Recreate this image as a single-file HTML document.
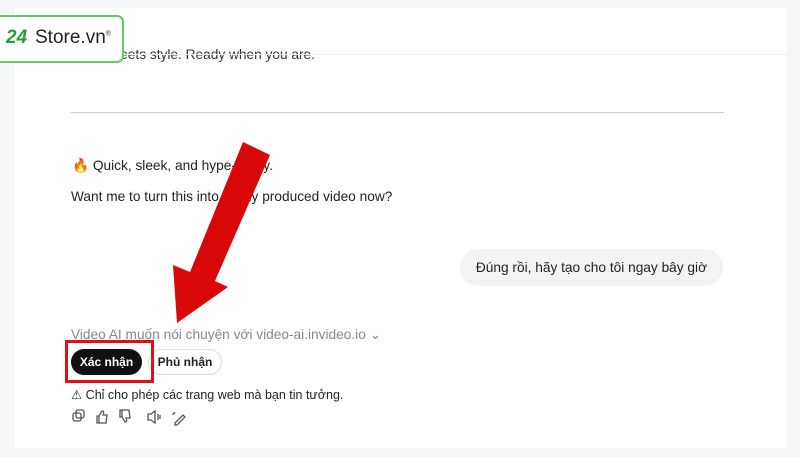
<!DOCTYPE html>
<html><head><meta charset="utf-8"><style>
body{margin:0;width:800px;height:457px;background:#f5f6f8;font-family:"Liberation Sans",sans-serif;position:relative;overflow:hidden;color:#222}
.panel{position:absolute;left:15px;top:8px;width:772px;height:440px;background:#fff}
.hl{position:absolute;left:15px;top:54px;width:772px;height:1px;background:#eee}
.t{position:absolute;font-size:13.7px;white-space:nowrap}
.div{position:absolute;left:71px;top:112px;width:653px;height:1px;background:#ccc}
.bubble{position:absolute;left:460px;top:249px;width:263px;height:37px;border-radius:19px;background:#f3f3f3;font-size:13.7px;line-height:37px;text-align:center}
.logo{position:absolute;left:-10px;top:15px;width:130px;height:44px;border:2px solid #6cc46c;border-left-color:#2aa0a0;border-radius:7px;background:#fff}
.btn1{position:absolute;left:71px;top:349px;width:71px;height:26px;border-radius:13px;background:#111;color:#fff;font-size:12px;font-weight:bold;text-align:center;line-height:26px}
.btn2{position:absolute;left:148px;top:349px;width:74px;height:26px;border-radius:13px;border:1px solid #ddd;box-sizing:border-box;font-size:12px;font-weight:bold;text-align:center;line-height:24px}
.red{position:absolute;left:65px;top:340px;width:89px;height:43px;border:3px solid #e0101a;box-sizing:border-box}
</style></head><body>
<div class="panel"></div>
<div class="t" style="left:71px;top:47px;color:#333">| &nbsp;&nbsp;&nbsp;&nbsp;&nbsp;&nbsp;&nbsp;&nbsp;meets style. Ready when you are.</div>
<div class="hl"></div>
<div class="div"></div>
<div class="t" style="left:72px;top:158px">🔥 Quick, sleek, and hype-ready.</div>
<div class="t" style="left:71px;top:189px">Want me to turn this into a fully produced video now?</div>
<div class="bubble">Đúng rồi, hãy tạo cho tôi ngay bây giờ</div>
<div class="t" style="left:71px;top:327px;color:#888">Video AI muốn nói chuyện với video-ai.invideo.io ⌄</div>
<div class="btn1">Xác nhận</div>
<div class="btn2">Phủ nhận</div>
<div class="red"></div>
<div class="t" style="left:71px;top:387px;font-size:12.5px">⚠ Chỉ cho phép các trang web mà bạn tin tưởng.</div>
<svg style="position:absolute;left:70px;top:409px" width="120" height="18" fill="none" stroke="#555" stroke-width="1.3">
<rect x="3" y="4" width="8" height="8" rx="2"/><rect x="6" y="1" width="8" height="8" rx="2"/>
<path d="M29 7v7h-2V7zM29 7l3-5c2 0 2 2 1 4h4l-1 8h-7"/>
<path d="M52 8V1h-2v7zM52 8l3 5c2 0 2-2 1-4h4l-1-8h-7"/>
<path d="M78 5h3l4-3v12l-4-3h-3zM88 5v6M90 6v4"/>
<path d="M105 14l8-8 2 2-8 8h-2zM104 3l1 2M102 5h2"/>
</svg>
<svg style="position:absolute;left:0;top:0" width="800" height="457">
<polygon points="243,142 270,155 215,281 228,287 177,323 173,265 190,272" fill="#d80808"/>
</svg>
<div class="logo"><span style="position:absolute;left:14px;top:10px;font-size:19px;font-weight:bold;font-style:italic;color:#2e9a3e">24</span><span style="position:absolute;left:43px;top:10px;font-size:19px;color:#222">Store.vn<sup style="font-size:7px">®</sup></span></div>
</body></html>
